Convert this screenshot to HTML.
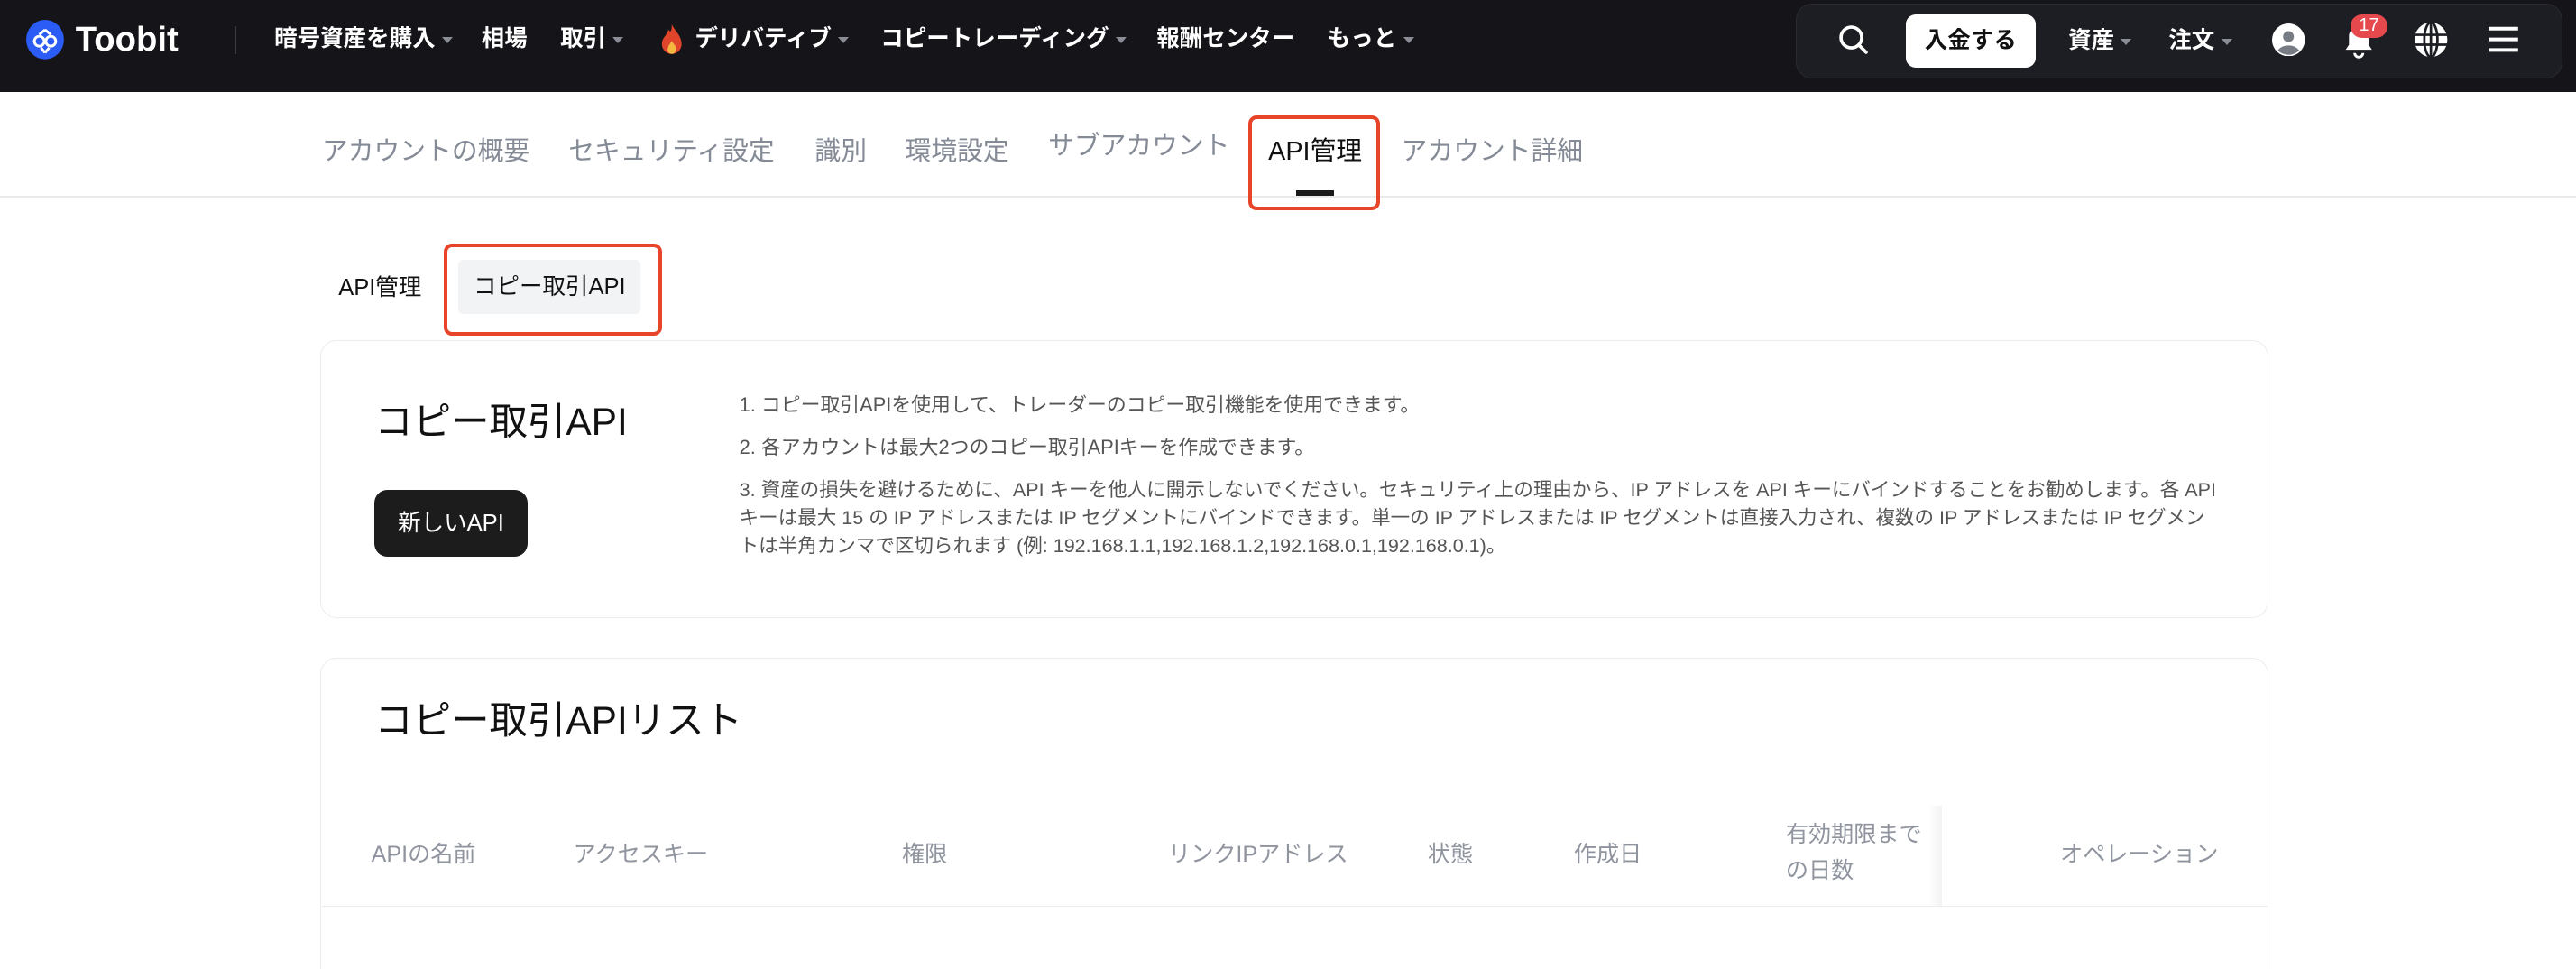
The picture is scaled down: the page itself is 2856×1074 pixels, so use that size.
<!DOCTYPE html>
<html><head><meta charset="utf-8"><style>
*{margin:0;padding:0;box-sizing:border-box}
html,body{width:2856px;height:1074px;overflow:hidden;background:#fff}
#w{zoom:1.82143;width:1568px;height:590px;position:relative;font-family:"Liberation Sans","Noto Sans CJK JP",sans-serif}
.a{position:absolute;white-space:nowrap}
.hd{position:absolute;left:0;top:0;width:1568px;height:56px;background:#141419}
.mi{position:absolute;top:15px;color:#fff;font-size:14px;font-weight:bold;line-height:18px}
.car{display:inline-block;width:0;height:0;border-left:3.5px solid transparent;border-right:3.5px solid transparent;border-top:4px solid #8a8d96;margin-left:4px;vertical-align:middle}
.tab{position:absolute;top:81px;font-size:15.8px;color:#858b96;line-height:22px}
.th{position:absolute;font-size:13.8px;color:#8f949e;line-height:22px}
.tx{position:absolute;left:450px;font-size:12px;color:#555;line-height:17px;white-space:nowrap}
</style></head><body><div id="w">
<div class="hd"></div>
<svg class="a" style="left:16px;top:12px" width="23" height="24" viewBox="0 0 23 24"><ellipse cx="11.5" cy="12" rx="11.5" ry="12" fill="#2b5cf5"/><g fill="none" stroke="#fff" stroke-width="1.6"><circle cx="8" cy="13" r="3"/><circle cx="15" cy="13" r="3"/><path d="M11.5 6 L8 9 M11.5 6 L15 9 M11.5 20 L9 17 M11.5 20 L14 17"/></g></svg>
<div class="a" style="left:46px;top:12px;color:#fff;font-size:21px;font-weight:bold;line-height:24px">Toobit</div>
<div class="a" style="left:143px;top:16px;width:1px;height:17px;background:#3a3b40"></div>
<div class="mi" style="left:167px">暗号資産を購入<span class="car"></span></div>
<div class="mi" style="left:293px">相場</div>
<div class="mi" style="left:341px">取引<span class="car"></span></div>
<svg class="a" style="left:402px;top:15px" width="14" height="19" viewBox="0 0 14 19"><path d="M7 0C9 4 13 7 13 12A6 6 0 0 1 1 12C1 8 4 7 5 3C6 5 7 5 7 0Z" fill="#e0442b"/><path d="M7 10C8 12 10 13 9.5 15.5A2.5 2.5 0 0 1 4.5 15.5C4.5 13 6 12 7 10Z" fill="#f4b740"/></svg>
<div class="mi" style="left:423px">デリバティブ<span class="car"></span></div>
<div class="mi" style="left:536px">コピートレーディング<span class="car"></span></div>
<div class="mi" style="left:704px">報酬センター</div>
<div class="mi" style="left:808px">もっと<span class="car"></span></div>
<div class="a" style="left:1093px;top:2px;width:467px;height:46px;background:#1d1e23;border:1px solid #2a2b30;border-radius:10px"></div>
<svg class="a" style="left:1119px;top:15px" width="19" height="19" viewBox="0 0 19 19"><circle cx="8" cy="8" r="6.3" fill="none" stroke="#fff" stroke-width="2"/><path d="M12.5 12.5L17 17" stroke="#fff" stroke-width="2" stroke-linecap="round"/></svg>
<div class="a" style="left:1160px;top:9px;width:79px;height:32px;background:#fff;border-radius:6px;font-size:14px;font-weight:bold;color:#111;text-align:center;line-height:32px">入金する</div>
<div class="mi" style="left:1259px;top:16px">資産<span class="car"></span></div>
<div class="mi" style="left:1320px;top:16px">注文<span class="car"></span></div>
<svg class="a" style="left:1383px;top:14px" width="20" height="20" viewBox="0 0 20 20"><circle cx="10" cy="10" r="10" fill="#fff"/><circle cx="10" cy="8" r="3.3" fill="#777b84"/><path d="M3.5 16.5A7 5 0 0 1 16.5 16.5A9.5 9.5 0 0 1 3.5 16.5Z" fill="#777b84"/></svg>
<svg class="a" style="left:1426px;top:14px" width="20" height="22" viewBox="0 0 20 22"><path d="M10 2C6 2 4 5 4 8V13L2 16H18L16 13V8C16 5 14 2 10 2Z" fill="#fff"/><path d="M7.5 18A2.5 2.5 0 0 0 12.5 18" fill="none" stroke="#fff" stroke-width="1.6"/></svg>
<div class="a" style="left:1431px;top:9px;width:22px;height:14px;background:#e5484d;border-radius:7px;color:#fff;font-size:11px;text-align:center;line-height:14px">17</div>
<svg class="a" style="left:1469px;top:13px" width="21" height="22" viewBox="0 0 21 22"><ellipse cx="10.5" cy="11" rx="10" ry="10.5" fill="#fff"/><g stroke="#1d1e23" stroke-width="1.5" fill="none"><ellipse cx="10.5" cy="11" rx="4" ry="10.5"/><path d="M0.5 8H20.5M0.5 14H20.5M10.5 0.5V21.5"/></g></svg>
<svg class="a" style="left:1515px;top:16px" width="18" height="16" viewBox="0 0 18 16"><path d="M0 1.5H18M0 8H18M0 14.5H18" stroke="#fff" stroke-width="2.2"/></svg>

<div class="a" style="left:0;top:119px;width:1568px;height:1px;background:#ebebeb"></div>
<div class="tab" style="left:196px">アカウントの概要</div>
<div class="tab" style="left:346px">セキュリティ設定</div>
<div class="tab" style="left:496px">識別</div>
<div class="tab" style="left:551px">環境設定</div>
<div class="tab" style="left:638px;top:78px">サブアカウント</div>
<div class="tab" style="left:772px;top:81px;color:#111">API管理</div>
<div class="a" style="left:789px;top:116px;width:23px;height:3px;background:#1a1a1a"></div>
<div class="tab" style="left:853px">アカウント詳細</div>
<div class="a" style="left:760px;top:70px;width:80px;height:58px;border:2.5px solid #e8442a;border-radius:5px"></div>

<div class="a" style="left:206px;top:165px;font-size:14px;color:#111;line-height:20px">API管理</div>
<div class="a" style="left:279px;top:158px;width:111px;height:33px;background:#f2f3f5;border-radius:3px;font-size:14px;color:#111;text-align:center;line-height:33px">コピー取引API</div>
<div class="a" style="left:270px;top:148px;width:133px;height:56px;border:2.5px solid #e8442a;border-radius:5px"></div>

<div class="a" style="left:195px;top:207px;width:1186px;height:169px;border:1px solid #ececec;border-radius:10px"></div>
<div class="a" style="left:228px;top:242px;font-size:23.3px;color:#111;line-height:30px">コピー取引API</div>
<div class="a" style="left:228px;top:298px;width:93px;height:41px;background:#1c1c1c;border-radius:8px;color:#fff;font-size:14px;text-align:center;line-height:41px">新しいAPI</div>
<div class="tx" style="top:238px">1. コピー取引APIを使用して、トレーダーのコピー取引機能を使用できます。</div>
<div class="tx" style="top:264px">2. 各アカウントは最大2つのコピー取引APIキーを作成できます。</div>
<div class="tx" style="top:290px;font-size:11.83px">3. 資産の損失を避けるために、API キーを他人に開示しないでください。セキュリティ上の理由から、IP アドレスを API キーにバインドすることをお勧めします。各 API<br>キーは最大 15 の IP アドレスまたは IP セグメントにバインドできます。単一の IP アドレスまたは IP セグメントは直接入力され、複数の IP アドレスまたは IP セグメン<br>トは半角カンマで区切られます (例: 192.168.1.1,192.168.1.2,192.168.0.1,192.168.0.1)。</div>

<div class="a" style="left:195px;top:400px;width:1186px;height:210px;border:1px solid #ececec;border-radius:10px"></div>
<div class="a" style="left:228px;top:424px;font-size:23.3px;color:#111;line-height:30px">コピー取引APIリスト</div>
<div class="th" style="left:226px;top:509px">APIの名前</div>
<div class="th" style="left:349px;top:509px">アクセスキー</div>
<div class="th" style="left:549px;top:509px">権限</div>
<div class="th" style="left:711px;top:509px">リンクIPアドレス</div>
<div class="th" style="left:869px;top:509px">状態</div>
<div class="th" style="left:958px;top:509px">作成日</div>
<div class="th" style="left:1087px;top:497px">有効期限まで</div>
<div class="th" style="left:1087px;top:519px">の日数</div>
<div class="a" style="left:1174px;top:490px;width:8px;height:61px;background:linear-gradient(to right,rgba(0,0,0,0),rgba(0,0,0,0.05))"></div>
<div class="th" style="left:1254px;top:509px">オペレーション</div>
<div class="a" style="left:196px;top:551px;width:1184px;height:1px;background:#ececec"></div>
</div></body></html>
